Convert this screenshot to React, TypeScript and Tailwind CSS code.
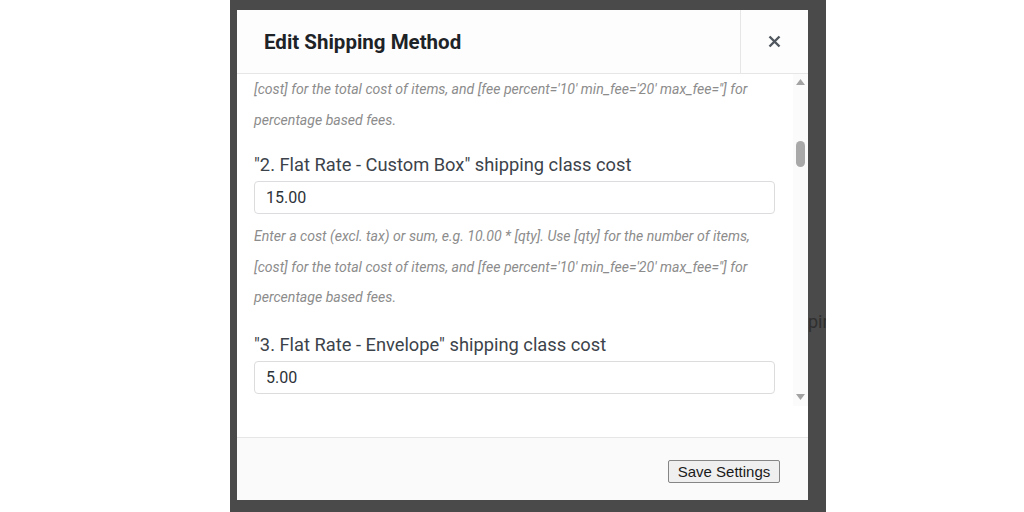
const descLines = [
  "Enter a cost (excl. tax) or sum, e.g. 10.00 * [qty]. Use [qty] for the number of items,",
  "[cost] for the total cost of items, and [fee percent='10' min_fee='20' max_fee=''] for",
  "percentage based fees.",
];

function Description({ lines }: { lines: string[] }) {
  return (
    <div className="text-[14.1px] italic leading-[30.5px] text-[#8c8c8c]">
      {lines.map((line) => (
        <p key={line} className="whitespace-nowrap">
          {line}
        </p>
      ))}
    </div>
  );
}

function CostField({ label, value }: { label: string; value: string }) {
  return (
    <div>
      <label className="block text-[18.3px] leading-[24px] text-[#3c434a]">{label}</label>
      <input
        readOnly
        value={value}
        className="mt-[4px] h-[33px] w-full rounded-[4px] border border-[#dcdcde] bg-white px-[11px] text-[16px] text-[#2c3338] outline-none"
      />
    </div>
  );
}

function Scrollbar() {
  return (
    <div className="flex w-[15px] flex-col items-center bg-[#fbfbfb]">
      <svg width="9" height="6" viewBox="0 0 9 6" className="mt-[5px]">
        <path d="M4.5 0L9 6H0z" fill="#a3a3a3" />
      </svg>
      <div className="mt-[56px] h-[26px] w-[9px] rounded-full bg-[#a9a9a9]" />
      <div className="flex-1" />
      <svg width="9" height="6" viewBox="0 0 9 6" className="mb-[6px]">
        <path d="M0 0H9L4.5 6z" fill="#a3a3a3" />
      </svg>
    </div>
  );
}

export default function App() {
  return (
    <div className="flex h-[512px] w-[1024px] bg-white font-['Roboto',sans-serif]">
      <div className="ml-[230px] flex h-full w-[596px] bg-[#4a4a4a]">
        <div className="mt-[10px] ml-[7px] flex h-[490px] w-[571px] flex-col bg-white">
          <header className="flex h-[64px] border-b border-[#e6e6e6] bg-[#fdfdfd]">
            <h1 className="flex-1 pl-[27px] pt-[17px] text-[20.5px] font-bold text-[#1d2327]">
              Edit Shipping Method
            </h1>
            <button
              type="button"
              className="flex w-[68px] items-center justify-center border-l border-[#e6e6e6] text-[#50575e]"
            >
              <svg width="13" height="13" viewBox="0 0 13 13">
                <path d="M1.5 1.5L11.5 11.5M11.5 1.5L1.5 11.5" stroke="#50575e" strokeWidth="2.4" />
              </svg>
            </button>
          </header>

          <div className="flex h-[332px]">
            <div className="flex-1 overflow-hidden pl-[17px] pr-[18px]">
              <div className="text-[14.1px] italic leading-[30.5px] text-[#8c8c8c]">
                <p className="whitespace-nowrap">{descLines[1]}</p>
                <p className="whitespace-nowrap">{descLines[2]}</p>
              </div>
              <div className="mt-[18px]">
                <CostField label={'"2. Flat Rate - Custom Box" shipping class cost'} value="15.00" />
              </div>
              <div className="mt-[7px]">
                <Description lines={descLines} />
              </div>
              <div className="mt-[20px]">
                <CostField label={'"3. Flat Rate - Envelope" shipping class cost'} value="5.00" />
              </div>
            </div>
            <Scrollbar />
          </div>

          <div className="h-[31px] bg-white" />

          <footer className="flex flex-1 items-center justify-end border-t border-[#e6e6e6] bg-[#fafafa] pr-[28px]">
            <button
              type="button"
              className="mt-[4px] h-[23px] w-[112px] rounded-[2px] border border-[#858585] bg-[#efefef] font-['Liberation_Sans',Arial,sans-serif] text-[15px] text-[#1a1a1a]"
            >
              Save Settings
            </button>
          </footer>
        </div>
        <div className="flex-1 overflow-hidden pt-[310px]">
          <span className="block text-[18px] leading-[24px] text-[#1e1e1e] opacity-60">pir</span>
        </div>
      </div>
    </div>
  );
}
